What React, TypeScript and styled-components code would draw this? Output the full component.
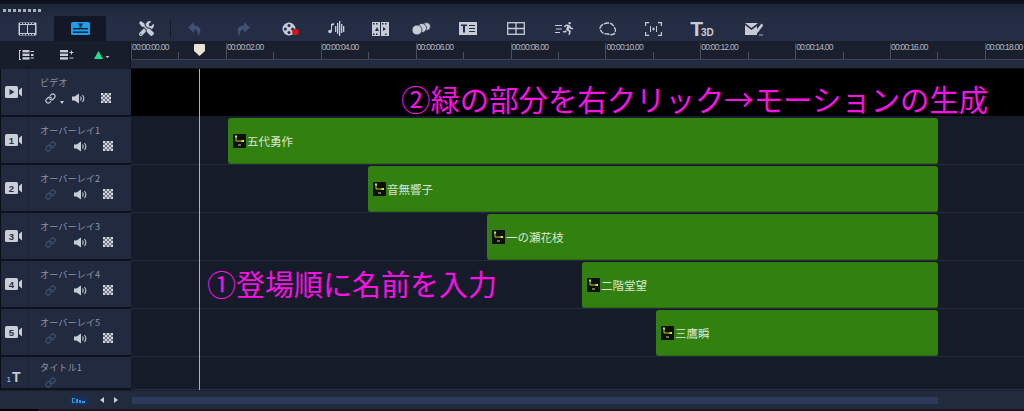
import React from 'react';
import styled, { createGlobalStyle } from 'styled-components';
import { Link } from 'lucide-react';
import { FaTools, FaRunning } from 'react-icons/fa';

const GlobalStyle = createGlobalStyle`
  html, body {
    margin: 0;
    padding: 0;
    background: #0c0f18;
  }
  body {
    font-family: "Noto Sans CJK JP", "Liberation Sans", sans-serif;
  }
`;

const Editor = styled.div`
  display: flex;
  flex-direction: column;
  width: 1024px;
  height: 411px;
  overflow: hidden;
  background: #0c0f18;
`;

const TopStrip = styled.div`
  height: 4px;
  background: #0e121d;
  flex: none;
`;

const Toolbar = styled.div`
  flex: none;
  height: 37px;
  background: linear-gradient(#1d2436, #242d44 40%);
`;

const Grip = styled.div`
  display: flex;
  gap: 2px;
  height: 12px;
  padding: 5px 0 0 3px;
  box-sizing: border-box;
`;

const GripDot = styled.span`
  width: 3px;
  height: 3px;
  background: #a9aeb9;
`;

const ToolRow = styled.div`
  display: flex;
  align-items: center;
  height: 25px;
  padding-left: 18px;
`;

const Tool = styled.div<{ $gap: number; $w: number; $color?: string }>`
  flex: none;
  display: flex;
  align-items: center;
  justify-content: center;
  margin-left: ${({ $gap }) => $gap}px;
  width: ${({ $w }) => $w}px;
  color: ${({ $color }) => $color || '#c6cbd5'};
`;

const ActiveTab = styled.div`
  flex: none;
  display: flex;
  align-items: center;
  justify-content: center;
  margin-left: 17px;
  width: 52px;
  height: 25px;
  background: #131826;
`;

const ToolDivider = styled.div`
  flex: none;
  width: 1px;
  height: 19px;
  margin-left: 16px;
  background: #151a28;
`;

const Text3d = styled.div`
  display: flex;
  align-items: flex-end;
  font-family: "Liberation Sans", sans-serif;
  color: #c6cbd5;
  line-height: 1;
`;

const BigT = styled.span`
  font-size: 21px;
  font-weight: 700;
  margin-right: -2px;
`;

const Small3d = styled.span`
  font-size: 10px;
  font-weight: 700;
  padding-bottom: 1px;
`;

const RulerRow = styled.div`
  flex: none;
  display: flex;
  height: 28px;
`;

const RulerCorner = styled.div`
  flex: none;
  display: flex;
  align-items: center;
  width: 131px;
  padding-left: 19px;
  box-sizing: border-box;
  background: #181d2b;
  border-right: 1px solid #0f1320;
`;

const CornerTool = styled.div<{ $gap: number }>`
  display: flex;
  margin-left: ${({ $gap }) => $gap}px;
  color: #c6cbd5;
`;

const RulerBody = styled.div`
  position: relative;
  flex: 1;
  display: flex;
  flex-direction: column;
  overflow: hidden;
  background: #1a1f2e;
`;

const Scale = styled.div`
  display: flex;
  align-items: flex-end;
  height: 18px;
  flex: none;
  border-bottom: 1px solid #3e4456;
  box-sizing: content-box;
`;

const Tick = styled.div<{ $major?: boolean }>`
  flex: none;
  width: 47.45px;
  height: ${({ $major }) => ($major ? 16 : 7)}px;
  box-sizing: border-box;
  border-left: 1px solid #4a5062;
  font-family: "Liberation Sans", sans-serif;
  font-size: 8.5px;
  line-height: 9px;
  letter-spacing: -0.75px;
  color: #b4b8c2;
  white-space: nowrap;
`;

const RulerFoot = styled.div`
  flex: 1;
  background: #222a3d;
  border-bottom: 1px solid #10131d;
`;

const PlayMarker = styled.svg`
  position: absolute;
  left: 63px;
  top: 3px;
`;

const Tracks = styled.div`
  position: relative;
  flex: none;
  display: flex;
  flex-direction: column;
`;

const Playhead = styled.div`
  position: absolute;
  left: 199px;
  top: 0;
  bottom: 0;
  width: 1px;
  background: #8fb3ee;
`;

const Row = styled.div<{ $height: number }>`
  flex: none;
  display: flex;
  height: ${({ $height }) => $height}px;
`;

const Head = styled.div`
  flex: none;
  display: flex;
  width: 130px;
  margin-left: 1px;
  box-sizing: border-box;
  background: #212a3e;
  border-bottom: 2px solid #10131d;
`;

const HeadIcon = styled.div`
  flex: none;
  display: flex;
  align-items: center;
  justify-content: center;
  width: 28px;
  padding-right: 2px;
  box-sizing: border-box;
  border-right: 1px solid #1b2234;
`;

const TitleMark = styled.div`
  display: flex;
  align-items: baseline;
  font-family: "Liberation Sans", sans-serif;
  color: #c6cbd5;
  margin-top: 8px;
`;

const TitleNum = styled.span`
  font-size: 8px;
  margin-right: 1px;
`;

const TitleT = styled.span`
  font-size: 14px;
  font-weight: 700;
`;

const HeadInfo = styled.div<{ $top?: number }>`
  flex: 1;
  display: flex;
  flex-direction: column;
  padding: ${({ $top }) => $top ?? 5}px 0 0 11px;
`;

const TrackName = styled.div`
  font-size: 9.2px;
  line-height: 16px;
  color: #8e95a3;
  white-space: nowrap;
`;

const HeadControls = styled.div<{ $gap?: number }>`
  display: flex;
  align-items: center;
  height: 16px;
  margin-top: ${({ $gap }) => $gap ?? 0}px;
  padding-left: 5px;
`;

const Control = styled.div<{ $gap?: number; $color?: string }>`
  display: flex;
  margin-left: ${({ $gap }) => $gap || 0}px;
  color: ${({ $color }) => $color || '#c6cbd5'};
`;

const DropCaret = styled.span`
  width: 0;
  height: 0;
  margin: 8px 0 0 4px;
  border: 2.5px solid transparent;
  border-top: 3px solid #c6cbd5;
  border-bottom: 0;
`;

const Lane = styled.div<{ $black?: boolean; $pad?: number }>`
  flex: 1;
  min-width: 0;
  display: flex;
  align-items: flex-start;
  padding-left: ${({ $pad }) => $pad || 0}px;
  padding-right: 86px;
  box-sizing: border-box;
  background: ${({ $black }) => ($black ? '#000' : '#161b29')};
  border-bottom: 1px solid ${({ $black }) => ($black ? '#161b29' : '#262c3c')};
`;

const Note = styled.div<{ $top: number; $size: number }>`
  flex: none;
  margin-top: ${({ $top }) => $top}px;
  font-size: ${({ $size }) => $size}px;
  line-height: 36px;
  color: #f812e4;
  white-space: nowrap;
`;

const Clip = styled.div<{ $width: number }>`
  flex: none;
  display: flex;
  align-items: center;
  width: ${({ $width }) => $width}px;
  height: 46px;
  margin-left: auto;
  margin-top: 1px;
  padding-left: 5px;
  box-sizing: border-box;
  background: #32800f;
  border-radius: 3px;
  box-shadow: inset 0 -1px 0 #2a6b10;
`;

const ClipLabel = styled.span`
  margin-left: 1px;
  font-size: 11.5px;
  line-height: 16px;
  color: #dbe7d4;
  white-space: nowrap;
`;

const Footer = styled.div`
  flex: none;
  display: flex;
  align-items: center;
  height: 19px;
  background: #222a3e;
  border-top: 1px solid #1a2031;
  box-sizing: border-box;
  padding-left: 69px;
`;

const ZoomFit = styled.div`
  flex: none;
  display: flex;
  align-items: center;
  justify-content: center;
  width: 20px;
  height: 10px;
  background: #1c2f52;
  border-radius: 1px;
`;

const Arrow = styled.span<{ $dir: 'left' | 'right'; $gap: number }>`
  flex: none;
  width: 0;
  height: 0;
  margin-left: ${({ $gap }) => $gap}px;
  border-top: 3.5px solid transparent;
  border-bottom: 3.5px solid transparent;
  ${({ $dir }) =>
    $dir === 'left' ? 'border-right: 4px solid #c6cbd5;' : 'border-left: 4px solid #c6cbd5;'}
`;

const ScrollBar = styled.div`
  flex: none;
  width: 806px;
  height: 7px;
  margin-left: 14px;
  background: #2e3a59;
`;

const BottomEdge = styled.div`
  flex: 1;
  display: flex;
  background: #17181c;
`;

const BottomBlack = styled.div`
  width: 38px;
  background: #000;
`;

const FilmIcon = () => (
  <svg width="19" height="14" viewBox="0 0 19 14" fill="none">
    <rect x="0.5" y="0.5" width="18" height="13" rx="1" fill="#c6cbd5" />
    <rect x="2" y="3" width="7" height="8" fill="#232c42" />
    <rect x="10" y="3" width="7" height="8" fill="#232c42" />
    {[2, 5, 8, 11, 14].map((x) => (
      <g key={x} fill="#232c42">
        <rect x={x} y="1" width="2" height="1" />
        <rect x={x} y="12" width="2" height="1" />
      </g>
    ))}
  </svg>
);

const TimelineIcon = () => (
  <svg width="19" height="13" viewBox="0 0 19 13">
    <rect width="19" height="13" rx="1.5" fill="#1e9eee" />
    <rect x="2" y="6" width="15" height="1.4" fill="#10222f" />
    <rect x="2" y="9.5" width="15" height="1.4" fill="#10222f" />
    <path d="M6.5 1.5h6l-2 2v2h-2v-2z" fill="#10222f" />
  </svg>
);

const TurnArrow = ({ flip }: { flip?: boolean }) => (
  <svg width="14" height="14" viewBox="0 0 14 14" fill="currentColor">
    <path
      d="M6 0L0 5.500L6 11V7.500C9 7.500 10.500 9.500 10 14C13 11.500 14.500 3.500 6 3.500Z"
      transform={flip ? 'matrix(-1 0 0 1 14 0)' : undefined}
    />
  </svg>
);

const ReelIcon = () => (
  <svg width="17" height="14" viewBox="0 0 17 14">
    <circle cx="7" cy="7" r="6.5" fill="#c6cbd5" />
    <g fill="#232c42">
      <circle cx="7" cy="3.4" r="1.5" />
      <circle cx="3.4" cy="7" r="1.5" />
      <circle cx="10.6" cy="7" r="1.5" />
      <circle cx="7" cy="10.6" r="1.5" />
    </g>
    <circle cx="13.5" cy="10" r="3.3" fill="#dc0f14" />
  </svg>
);

const MusicIcon = () => (
  <svg width="17" height="15" viewBox="0 0 17 15" fill="#c6cbd5">
    <circle cx="2" cy="10.5" r="1.8" />
    <rect x="3" y="3" width="1" height="7.5" />
    <path d="M3 3l3-1v2l-3 1z" />
    {[
      [7, 5, 6],
      [9, 2, 11],
      [11, 0, 15],
      [13, 3, 9],
      [15, 5, 6],
    ].map(([x, y, h]) => (
      <rect key={x} x={x} y={y} width="1.3" height={h} />
    ))}
  </svg>
);

const StoryIcon = () => (
  <svg width="17" height="14" viewBox="0 0 17 14">
    <rect width="17" height="14" fill="#c6cbd5" />
    <g fill="#232c42">
      <rect x="8" y="0" width="1" height="14" />
      <rect x="1" y="1" width="1.5" height="1.5" />
      <rect x="4" y="1" width="1.5" height="1.5" />
      <rect x="10" y="1" width="1.5" height="1.5" />
      <rect x="13" y="1" width="1.5" height="1.5" />
      <rect x="1" y="11.5" width="1.5" height="1.5" />
      <rect x="4" y="11.5" width="1.5" height="1.5" />
      <rect x="13" y="11.5" width="1.5" height="1.5" />
      <path d="M3 9l2-4 2 4zM11 9V5l3 2z" />
    </g>
  </svg>
);

const CirclesIcon = () => (
  <svg width="19" height="13" viewBox="0 0 19 13" fill="#c6cbd5" stroke="#232c42" strokeWidth="0.8">
    <circle cx="14.5" cy="4.5" r="4" />
    <circle cx="10" cy="6" r="4.5" />
    <circle cx="5" cy="8" r="5" />
  </svg>
);

const TitleBoxIcon = () => (
  <svg width="18" height="13" viewBox="0 0 18 13">
    <rect width="18" height="13" fill="#c6cbd5" />
    <path d="M2 2.5h6v1.6H6v6.4H4V4.1H2z" fill="#232c42" />
    <g fill="#232c42">
      <rect x="10" y="3" width="6" height="1" />
      <rect x="10" y="6" width="6" height="1" />
      <rect x="10" y="9" width="6" height="1" />
    </g>
  </svg>
);

const GridIcon = () => (
  <svg width="18" height="13" viewBox="0 0 18 13" fill="none" stroke="#c6cbd5" strokeWidth="1.3">
    <rect x="0.7" y="0.7" width="16.6" height="11.6" />
    <path d="M9 .7v11.6M.7 6.5h16.6" />
  </svg>
);

const SpeedLines = () => (
  <svg width="7" height="10" viewBox="0 0 7 10" fill="#c6cbd5" style={{ flex: 'none' }}>
    <rect x="0" y="1" width="7" height="1" />
    <rect x="1" y="4.500" width="6" height="1" />
    <rect x="0" y="8" width="5" height="1" />
  </svg>
);

const BlobIcon = () => (
  <svg width="18" height="14" viewBox="0 0 18 14" fill="none" stroke="#c6cbd5" strokeWidth="1.4" strokeDasharray="5 1">
    <path d="M1 6c1-3 4-5 8-5 3 0 5 1 6 4 2 2 2 5 0 7-2 1-4 1-6 0-3 0-7 0-8-6z" />
  </svg>
);

const BracketIcon = () => (
  <svg width="17" height="14" viewBox="0 0 17 14" fill="none" stroke="#c6cbd5" strokeWidth="1.2">
    <path d="M.6 4V.6h3.500M13 .6h3.400V4M.6 10v3.400h3.500M13 13.400h3.400V10" />
    <path d="M5.500 4v6M11.500 4v6M7 7h3M8.500 5.500v3" strokeWidth="1" />
  </svg>
);

const CheckBoxIcon = () => (
  <svg width="18" height="14" viewBox="0 0 18 14">
    <path d="M0 1h13l-6.500 5zM0 3l6.500 5L12 4v9H0z" fill="#c6cbd5" />
    <path d="M11 9l5.500-7 1.500 1.200L12.500 10.500 10.500 11zM14 13h4" stroke="#c6cbd5" strokeWidth="0.8" fill="#c6cbd5" />
  </svg>
);

const ListAddIcon = () => (
  <svg width="15" height="10" viewBox="0 0 15 10" fill="#c6cbd5">
    <rect x="0" y="0" width="2" height="1" />
    <rect x="0" y="0" width="1" height="10" />
    <rect x="0" y="9" width="2" height="1" />
    <rect x="3.500" y="0" width="7" height="2.400" />
    <rect x="3.500" y="3.600" width="7" height="2.400" />
    <rect x="3.500" y="7.200" width="7" height="2.400" />
    <path d="M11.500 1h3.500v1h-3.500zM11.500 7.500h3.500v1h-3.500z" />
    <path d="M12 4l2 0 1 1-1 1h-2z" />
  </svg>
);

const RowsPlusIcon = () => (
  <svg width="14" height="10" viewBox="0 0 14 10" fill="#c6cbd5">
    <rect x="0" y="0" width="8" height="2.400" />
    <rect x="0" y="3.600" width="8" height="2.400" />
    <rect x="0" y="7.200" width="8" height="2.400" />
    <path d="M9.500 2h4v1h-4zM11 .4h1v4h-1zM9.500 7.500h4v1h-4z" />
  </svg>
);

const GreenTriangle = () => (
  <svg width="16" height="9" viewBox="0 0 16 9">
    <path d="M4.500 0l4.500 8H0z" fill="#1ee38c" />
    <path d="M11.500 5h4L13.500 7z" fill="#c6cbd5" />
  </svg>
);

const PlayCamera = ({ num }: { num?: number }) => (
  <svg width="17" height="12" viewBox="0 0 17 12">
    <rect width="13" height="12" rx="1.500" fill="#c9ced8" />
    <path d="M14 4l3-2.500v9L14 8z" fill="#c9ced8" />
    {num ? (
      <text
        x="6.500"
        y="9.500"
        fontSize="9.500"
        fontWeight="700"
        fontFamily="Liberation Sans, sans-serif"
        textAnchor="middle"
        fill="#2a3144"
      >
        {num}
      </text>
    ) : (
      <path d="M4.500 3l5 3-5 3z" fill="#2a3144" />
    )}
  </svg>
);

const SpeakerIcon = () => (
  <svg width="13" height="11" viewBox="0 0 13 11" fill="none" stroke="currentColor">
    <path d="M0 3.500h2.500L7 .5v10l-4.500-3H0z" fill="currentColor" stroke="none" />
    <path d="M8.500 3.500c.8 1.200.8 2.800 0 4M10.500 2c1.500 2 1.500 5 0 7" strokeWidth="1.100" />
  </svg>
);

const CheckerIcon = () => (
  <svg width="10" height="10" viewBox="0 0 10 10">
    <rect width="10" height="10" fill="#6b7080" />
    {Array.from({ length: 25 }, (_, i) =>
      ((i % 5) + Math.floor(i / 5)) % 2 === 0 ? (
        <rect key={i} x={(i % 5) * 2} y={Math.floor(i / 5) * 2} width="2" height="2" fill="#d4d7de" />
      ) : null
    )}
  </svg>
);

const ClipThumb = () => (
  <svg width="13" height="14" viewBox="0 0 13 14" style={{ flex: 'none' }}>
    <rect width="13" height="14" fill="#0b1008" />
    <path d="M3 2v5h6" fill="none" stroke="#b9c92a" strokeWidth="1" />
    <rect x="2" y="1.500" width="2" height="2" fill="#d5e030" />
    <rect x="8.500" y="6" width="2.500" height="2" fill="#d5e030" />
    <rect x="5" y="10.500" width="3" height="1" fill="#c8ccc4" />
  </svg>
);

const marks = ['00', '02', '04', '06', '08', '10', '12', '14', '16', '18'];
const overlayClips = [
  { name: 'オーバーレイ1', clip: '五代勇作', width: 710 },
  { name: 'オーバーレイ2', clip: '音無響子', width: 570 },
  { name: 'オーバーレイ3', clip: '一の瀬花枝', width: 451 },
  { name: 'オーバーレイ4', clip: '二階堂望', width: 356 },
  { name: 'オーバーレイ5', clip: '三鷹瞬', width: 282 },
];

const LinkMark = ({ dim }: { dim?: boolean }) => (
  <Control $color={dim ? '#3f5275' : '#c6cbd5'}>
    <Link size={11} strokeWidth={2.6} />
  </Control>
);

export default function App() {
  return (
    <Editor>
      <GlobalStyle />
      <TopStrip />
      <Toolbar>
        <Grip>
          {Array.from({ length: 8 }, (_, i) => (
            <GripDot key={i} />
          ))}
        </Grip>
        <ToolRow>
          <FilmIcon />
          <ActiveTab>
            <TimelineIcon />
          </ActiveTab>
          <Tool $gap={33} $w={15}>
            <FaTools size={15} />
          </Tool>
          <ToolDivider />
          <Tool $gap={17} $w={14} $color="#3f5275">
            <TurnArrow />
          </Tool>
          <Tool $gap={34} $w={14} $color="#3f5275">
            <TurnArrow flip />
          </Tool>
          <Tool $gap={32} $w={17}>
            <ReelIcon />
          </Tool>
          <Tool $gap={29} $w={17}>
            <MusicIcon />
          </Tool>
          <Tool $gap={27} $w={17}>
            <StoryIcon />
          </Tool>
          <Tool $gap={23} $w={19}>
            <CirclesIcon />
          </Tool>
          <Tool $gap={28} $w={18}>
            <TitleBoxIcon />
          </Tool>
          <Tool $gap={30} $w={18}>
            <GridIcon />
          </Tool>
          <Tool $gap={30} $w={19}>
            <SpeedLines />
            <FaRunning size={13} />
          </Tool>
          <Tool $gap={25} $w={18}>
            <BlobIcon />
          </Tool>
          <Tool $gap={28} $w={17}>
            <BracketIcon />
          </Tool>
          <Tool $gap={29} $w={22}>
            <Text3d>
              <BigT>T</BigT>
              <Small3d>3D</Small3d>
            </Text3d>
          </Tool>
          <Tool $gap={32} $w={18}>
            <CheckBoxIcon />
          </Tool>
        </ToolRow>
      </Toolbar>

      <RulerRow>
        <RulerCorner>
          <CornerTool $gap={0}>
            <ListAddIcon />
          </CornerTool>
          <CornerTool $gap={26}>
            <RowsPlusIcon />
          </CornerTool>
          <CornerTool $gap={20}>
            <GreenTriangle />
          </CornerTool>
        </RulerCorner>
        <RulerBody>
          <Scale>
            {marks.map((m) => (
              <React.Fragment key={m}>
                <Tick $major>{`00:00:${m}.00`}</Tick>
                <Tick />
              </React.Fragment>
            ))}
          </Scale>
          <RulerFoot />
          <PlayMarker width="11" height="12" viewBox="0 0 11 12">
            <path d="M0 1q0-1 1-1h9q1 0 1 1v6l-5.500 5L0 7z" fill="#e8e2d2" />
          </PlayMarker>
        </RulerBody>
      </RulerRow>

      <Tracks>
        <Row $height={48}>
          <Head>
            <HeadIcon>
              <PlayCamera />
            </HeadIcon>
            <HeadInfo>
              <TrackName>ビデオ</TrackName>
              <HeadControls>
                <LinkMark />
                <DropCaret />
                <Control $gap={8}>
                  <SpeakerIcon />
                </Control>
                <Control $gap={16}>
                  <CheckerIcon />
                </Control>
              </HeadControls>
            </HeadInfo>
          </Head>
          <Lane $black $pad={270}>
            <Note $top={11} $size={29.4}>
              ②緑の部分を右クリック→モーションの生成
            </Note>
          </Lane>
        </Row>

        {overlayClips.map((t, i) => (
          <Row $height={48} key={t.name}>
            <Head>
              <HeadIcon>
                <PlayCamera num={i + 1} />
              </HeadIcon>
              <HeadInfo>
                <TrackName>{t.name}</TrackName>
                <HeadControls>
                  <LinkMark dim />
                  <Control $gap={18}>
                    <SpeakerIcon />
                  </Control>
                  <Control $gap={16}>
                    <CheckerIcon />
                  </Control>
                </HeadControls>
              </HeadInfo>
            </Head>
            <Lane $pad={i === 3 ? 76 : 0}>
              {i === 3 && (
                <Note $top={4} $size={29}>
                  ①登場順に名前を入力
                </Note>
              )}
              <Clip $width={t.width}>
                <ClipThumb />
                <ClipLabel>{t.clip}</ClipLabel>
              </Clip>
            </Lane>
          </Row>
        ))}

        <Row $height={33}>
          <Head>
            <HeadIcon>
              <TitleMark>
                <TitleNum>1</TitleNum>
                <TitleT>T</TitleT>
              </TitleMark>
            </HeadIcon>
            <HeadInfo $top={2}>
              <TrackName>タイトル1</TrackName>
              <HeadControls $gap={2}>
                <LinkMark dim />
              </HeadControls>
            </HeadInfo>
          </Head>
          <Lane />
        </Row>
        <Playhead />
      </Tracks>

      <Footer>
        <ZoomFit>
          <svg width="14" height="5" viewBox="0 0 14 5" fill="#2a9be8">
            <path d="M0 0h3v1H1v3h2v1H0zM4 1h2v4H4zM7 2h2v3H7zM10 3h3v2h-3z" />
          </svg>
        </ZoomFit>
        <Arrow $dir="left" $gap={11} />
        <Arrow $dir="right" $gap={10} />
        <ScrollBar />
      </Footer>
      <BottomEdge>
        <BottomBlack />
      </BottomEdge>
    </Editor>
  );
}
